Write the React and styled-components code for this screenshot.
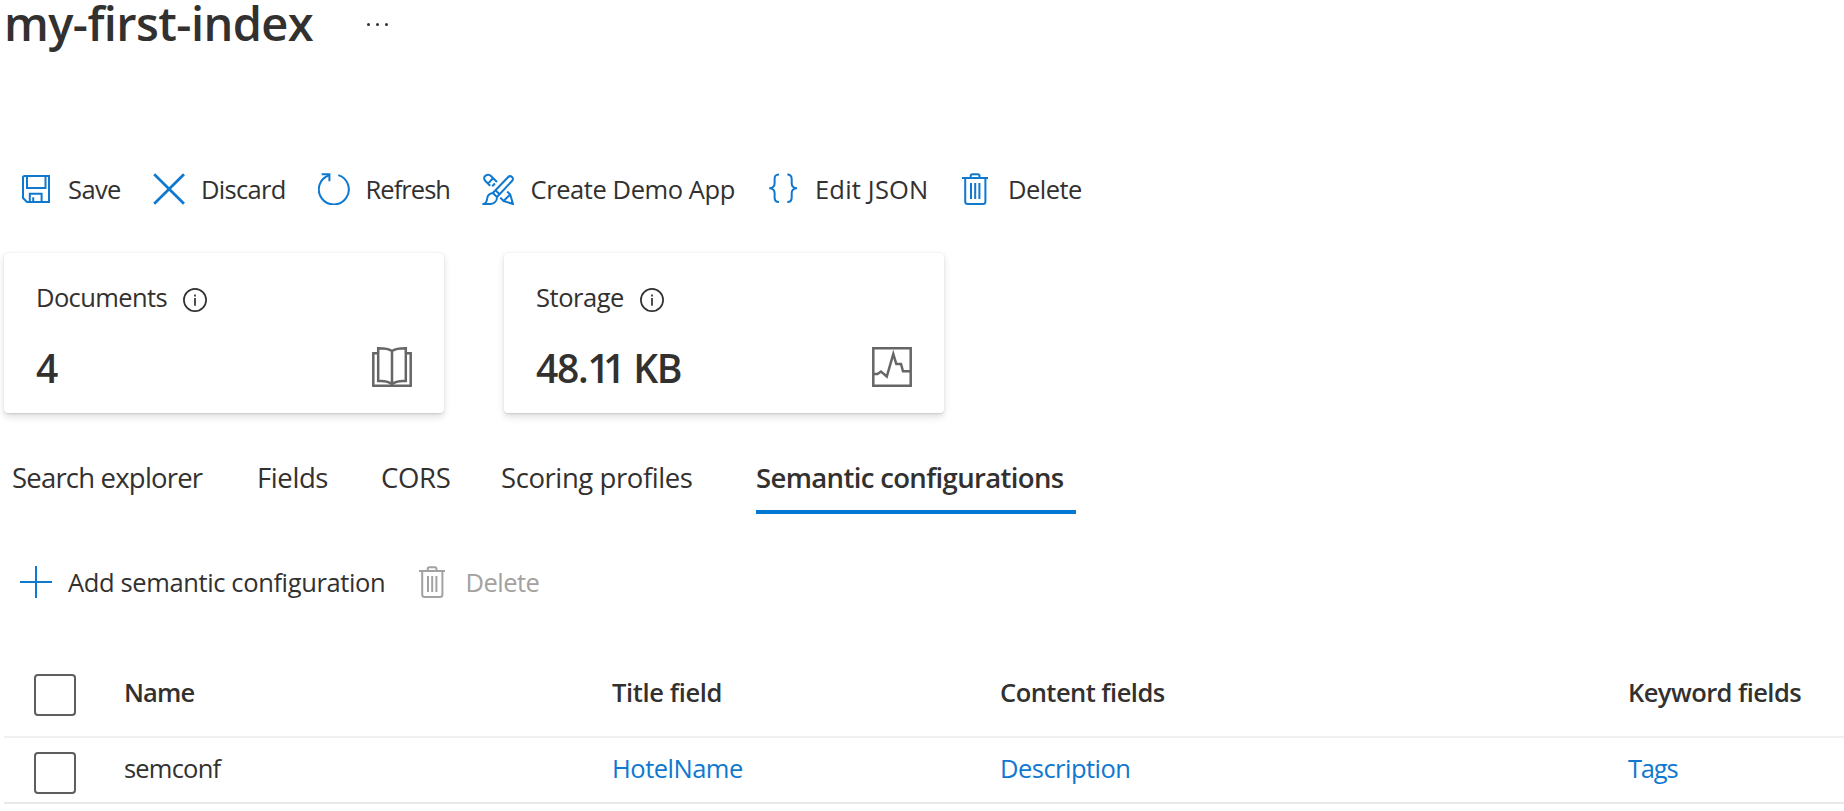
import React from "react";
import styled, { createGlobalStyle } from "styled-components";

const color = {
  text: "#323130",
  accent: "#0f78cf",
  underline: "#0078d4",
  link: "#0f78cf",
  disabled: "#a3a2a1",
  icon: "#666666",
  border: "#f0f0f0",
};

const GlobalStyle = createGlobalStyle`
  *, *::before, *::after { box-sizing: border-box; }
  html, body { margin: 0; background: #fff; }
  body {
    color: ${color.text};
    font-family: "Open Sans", "Noto Sans", sans-serif;
    font-size: 25.5px;
    font-weight: 400;
    font-variant-ligatures: none;
  }
`;

const Page = styled.main`
  width: 100%;
  height: 811px;
  padding-left: 4px;
  display: flex;
  flex-direction: column;
`;

const Text = styled.span`
  letter-spacing: ${(p) => p.$track || 0}px;
  white-space: nowrap;
`;

const Header = styled.header`
  height: 46px;
  display: flex;
  align-items: center;
`;

const Title = styled.h1`
  width: 363px;
  margin: 0;
  font-size: 47px;
  font-weight: 600;
  line-height: 47px;
  letter-spacing: -0.58px;
  white-space: nowrap;
`;

const MoreButton = styled.button`
  display: flex;
  gap: 6px;
  margin-top: 3px;
  padding: 0;
  border: 0;
  background: none;
`;

const Dot = styled.i`
  width: 3px;
  height: 3px;
  border-radius: 50%;
  background: ${color.text};
`;

const Toolbar = styled.div`
  height: 50px;
  margin-top: ${(p) => p.$top}px;
  padding-left: 16px;
  display: flex;
  align-items: center;
`;

const ToolButton = styled.button`
  flex: none;
  width: ${(p) => p.$width}px;
  height: 50px;
  padding: 0;
  border: 0;
  background: none;
  display: flex;
  align-items: center;
  gap: ${(p) => p.$gap || 16}px;
  font: inherit;
  line-height: 50px;
  color: ${(p) => (p.disabled ? color.disabled : color.text)};

  svg { color: ${(p) => (p.disabled ? color.disabled : color.accent)}; }
`;

const Icon = styled.svg`
  flex: none;
  width: ${(p) => p.$size || 32}px;
  height: ${(p) => p.$size || 32}px;
  fill: none;
  stroke: currentColor;
  stroke-width: ${(p) => p.$stroke || 2};
`;

const Cards = styled.section`
  display: flex;
  gap: 60px;
  margin-top: 39px;
`;

const Card = styled.article`
  width: 440px;
  height: 160px;
  padding: 26px 32px 0;
  border-radius: 4px;
  background: #fff;
  box-shadow: 0 3.2px 7.2px rgba(0, 0, 0, 0.13), 0 0.6px 1.8px rgba(0, 0, 0, 0.11);
`;

const CardLabel = styled.div`
  height: 36px;
  display: flex;
  align-items: center;
  gap: 16px;
  line-height: 36px;

  svg { margin-top: 6px; }
`;

const CardBody = styled.div`
  height: 52px;
  margin-top: 27px;
  display: flex;
  align-items: center;
  justify-content: space-between;
  color: ${color.icon};

  svg { margin-bottom: 2px; }
`;

const CardValue = styled.strong`
  color: ${color.text};
  font-size: 39px;
  font-weight: 600;
  line-height: 54px;
  letter-spacing: -1.3px;
  white-space: nowrap;
`;

const Kern = styled.span`
  letter-spacing: -6.4px;
`;

const Tabs = styled.nav`
  display: flex;
  margin-top: 32px;
  padding-left: 8px;
`;

const Tab = styled.a`
  width: ${(p) => p.$width}px;
  height: 69px;
  border-bottom: 4px solid ${(p) => (p.$active ? color.underline : "transparent")};
  font-size: 27.5px;
  font-weight: ${(p) => (p.$active ? 600 : 400)};
  line-height: 65px;
`;

const Table = styled.div`
  margin-top: 45px;
`;

const Row = styled.div`
  height: ${(p) => (p.$head ? 86 : 66)}px;
  border-bottom: 2px solid ${(p) => (p.$head ? color.border : "#e9e9e9")};
  display: grid;
  grid-template-columns: 120px 488px 388px 628px 1fr;
  align-items: center;
  font-weight: ${(p) => (p.$head ? 600 : 400)};
`;

const Checkbox = styled.span`
  width: 42px;
  height: 42px;
  margin: ${(p) => p.$drop}px 0 0 30px;
  border: 2px solid #605e5c;
  border-radius: 4px;
`;

const Cell = styled.div`
  padding-bottom: 4px;
  line-height: 36px;
  color: ${(p) => (p.$link ? color.link : "inherit")};
`;

const SaveIcon = () => (
  <Icon viewBox="0 0 32 32">
    <path d="M4.5 3H29v26H7l-4-4V4.5Q3 3 4.5 3Z" />
    <path d="M7 3v12h18.500V3M9.800 29v-8.300h11.800V29M13.200 24.200V29" />
  </Icon>
);

const DiscardIcon = () => (
  <Icon viewBox="0 0 32 32" $stroke={2.7}>
    <path d="M1.2 1.2L31 30.800M31 1.200L1.200 30.800" />
  </Icon>
);

const RefreshIcon = () => (
  <Icon viewBox="0 0 32 32">
    <path d="M20.300 2.100A15 15 0 1 1 11 2.200" />
    <path d="M3.700 1.200h7.700v7" />
  </Icon>
);

const DemoAppIcon = () => (
  <Icon viewBox="0 0 32 32" strokeLinejoin="round">
    <path d="M10.800 20L26 4.200C28.600 1.600 32.600 5 30.200 7.800L15 24" />
    <path d="M13.500 17.300l4 4" />
    <path d="M10.800 20C7.500 20.400 5.600 22 5.200 25.500 4.800 28.600 3.600 30.600 1.200 31H8.500c4-.2 6.500-3 6.500-7Z" />
    <path d="M8.200 12.800L3.400 8C1.400 5.800 2 3.600 3.600 2.600 5.400 1.600 7.600 1.600 9.200 3.200L15 9M6 10.600l5.200-5.600" />
    <path d="M10.200 13.200L13 10.500" />
    <path d="M25.200 18.500l3 3L31 31l-9.400-3-3.400-3.400M28.200 21.500L21.600 28" />
    <path d="M31.500 31.500l-3.800-1.200 2.600-2.600Z" fill="currentColor" stroke="none" />
  </Icon>
);

const BracesIcon = () => (
  <Icon viewBox="0 0 32 32">
    <path d="M12 1.400C8.600 1.400 7.600 3 7.600 6v4.500C7.600 13.500 6 15 2.300 15.300 6 15.600 7.600 17 7.600 20v4.500C7.600 27.600 8.600 29 12 29" />
    <path d="M20.300 1.400C23.700 1.400 24.700 3 24.700 6v4.500C24.700 13.500 26.300 15 30 15.300 26.300 15.600 24.700 17 24.700 20v4.500C24.700 27.600 23.700 29 20.300 29" />
  </Icon>
);

const TrashIcon = () => (
  <Icon viewBox="0 0 32 32">
    <path d="M3 5h26M11.700 5V3Q11.700 1.200 13.500 1.200h5.200Q20.500 1.200 20.500 3v2" />
    <path d="M6.200 5v23.500Q6.200 31 8.700 31h15.200Q26.400 31 26.400 28.500V5" />
    <path d="M12 10v16M16.200 10v16M20.400 10v16" />
  </Icon>
);

const AddIcon = () => (
  <Icon viewBox="0 0 32 32">
    <path d="M16 0v32M0 16h32" />
  </Icon>
);

const InfoIcon = () => (
  <Icon viewBox="0 0 24 24" $size={24} $stroke={1.7}>
    <circle cx="12" cy="12" r="11.100" />
    <path d="M12 10v7.800M12 6.400v2" />
  </Icon>
);

const BookIcon = () => (
  <Icon viewBox="0 0 40 40" $size={40} $stroke={2.5}>
    <path d="M6 6.200H1.300V38.700H38.700V6.200H34" />
    <path d="M20 4C17 1.800 12 1.300 6.200 1.300V34c5.800-.4 10.800.5 13.800 3.200 3-2.700 8-3.600 13.800-3.200V1.300C28 1.300 23 1.800 20 4ZM20 4v34" />
  </Icon>
);

const ActivityIcon = () => (
  <Icon viewBox="0 0 40 40" $size={40} $stroke={2.5}>
    <path d="M1.300 1.300h37.400v37.400H1.300Z" />
    <path d="M1 27h4.500l3.500-2.500 5.800 5L21.300 7l3 10h4.700l2 7.300h8" />
  </Icon>
);

const commands = [
  { label: "Save", icon: SaveIcon, width: 133, track: -0.6 },
  { label: "Discard", icon: DiscardIcon, width: 165, track: -0.7 },
  { label: "Refresh", icon: RefreshIcon, width: 164, track: -0.95, gap: 15.5 },
  { label: "Create Demo App", icon: DemoAppIcon, width: 285, track: -0.42, gap: 16.5 },
  { label: "Edit JSON", icon: BracesIcon, width: 192, track: 0.19 },
  { label: "Delete", icon: TrashIcon, width: 140, track: -0.52, gap: 17 },
];

const tabs = [
  { label: "Search explorer", width: 245, track: -0.8 },
  { label: "Fields", width: 124, track: -0.4 },
  { label: "CORS", width: 120, track: -0.32 },
  { label: "Scoring profiles", width: 255, track: -0.42 },
  { label: "Semantic configurations", width: 320, track: -0.64, active: true },
];

export default function App() {
  return (
    <>
      <GlobalStyle />
      <Page>
        <Header>
          <Title>my-first-index</Title>
          <MoreButton aria-label="More">
            <Dot />
            <Dot />
            <Dot />
          </MoreButton>
        </Header>

        <Toolbar $top={118}>
          {commands.map(({ label, icon: Glyph, width, track, gap }) => (
            <ToolButton key={label} $width={width} $gap={gap}>
              <Glyph />
              <Text $track={track}>{label}</Text>
            </ToolButton>
          ))}
        </Toolbar>

        <Cards>
          <Card>
            <CardLabel>
              <Text $track={-0.61}>Documents</Text>
              <InfoIcon />
            </CardLabel>
            <CardBody>
              <CardValue>4</CardValue>
              <BookIcon />
            </CardBody>
          </Card>
          <Card>
            <CardLabel>
              <Text $track={-0.46}>Storage</Text>
              <InfoIcon />
            </CardLabel>
            <CardBody>
              <CardValue>
                48.<Kern>1</Kern>1 KB
              </CardValue>
              <ActivityIcon />
            </CardBody>
          </Card>
        </Cards>

        <Tabs>
          {tabs.map(({ label, width, track, active }) => (
            <Tab key={label} $width={width} $active={active}>
              <Text $track={track}>{label}</Text>
            </Tab>
          ))}
        </Tabs>

        <Toolbar $top={43}>
          <ToolButton $width={396}>
            <AddIcon />
            <Text $track={-0.375}>Add semantic configuration</Text>
          </ToolButton>
          <ToolButton $width={140} $gap={17.5} disabled>
            <TrashIcon />
            <Text $track={-0.52}>Delete</Text>
          </ToolButton>
        </Toolbar>

        <Table>
          <Row $head>
            <Checkbox $drop={2} />
            <Cell><Text $track={-0.87}>Name</Text></Cell>
            <Cell><Text $track={-0.36}>Title field</Text></Cell>
            <Cell><Text $track={-0.53}>Content fields</Text></Cell>
            <Cell><Text $track={-0.56}>Keyword fields</Text></Cell>
          </Row>
          <Row>
            <Checkbox $drop={6} />
            <Cell><Text $track={-0.8}>semconf</Text></Cell>
            <Cell $link><Text $track={-0.5}>HotelName</Text></Cell>
            <Cell $link><Text $track={-0.52}>Description</Text></Cell>
            <Cell $link><Text $track={-1.2}>Tags</Text></Cell>
          </Row>
        </Table>
      </Page>
    </>
  );
}
